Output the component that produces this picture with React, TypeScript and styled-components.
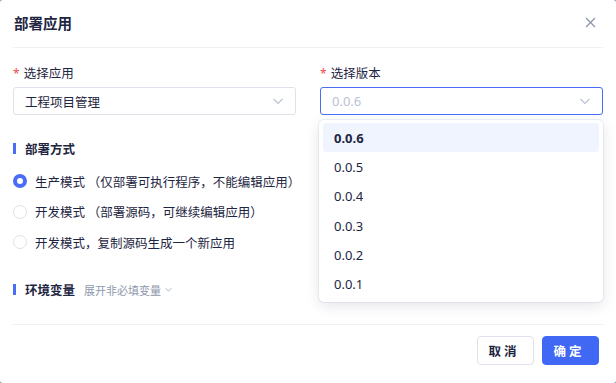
import styled, { createGlobalStyle } from 'styled-components';

const GlobalStyle = createGlobalStyle`
  html, body {
    margin: 0;
    padding: 0;
    background: #9aa0ad;
  }
  body {
    font-family: "Noto Sans", "Noto Sans CJK SC", sans-serif;
    color: #1d2541;
  }
  * { box-sizing: border-box; }
`;

const Modal = styled.div`
  width: 616px;
  height: 383px;
  background: #fff;
  border-radius: 3px;
  display: flex;
  flex-direction: column;
  padding: 0 13px;
  position: relative;
`;

const Header = styled.div`
  height: 48px;
  display: flex;
  align-items: center;
  justify-content: space-between;
  border-bottom: 1px solid #eef0f4;
  padding: 0 0 3px 1px;
`;

const Title = styled.div`
  font-size: 14.5px;
  font-weight: 600;
  color: #1d2541;
`;

const Close = styled.button`
  border: 0;
  background: none;
  padding: 0;
  width: 14px;
  height: 14px;
  margin-right: 6px;
  display: flex;
  align-items: center;
  justify-content: center;
  cursor: pointer;
`;

const Body = styled.div`
  flex: 1;
  padding-top: 17px;
  border-bottom: 1px solid #eef0f4;
`;

const FieldGrid = styled.div`
  display: grid;
  grid-template-columns: 283px 283px;
  column-gap: 24px;
`;

const Field = styled.div`
  position: relative;
  display: flex;
  flex-direction: column;
  gap: 4px;
`;

const Label = styled.div`
  font-size: 12.5px;
  line-height: 18px;
  color: #1d2541;
  display: flex;
  align-items: center;

  &::before {
    content: '*';
    color: #f04b4b;
    margin-right: 4px;
    font-size: 12px;
  }
`;

const Select = styled.div<{ $open?: boolean }>`
  height: 28px;
  border: 1px solid ${(p) => (p.$open ? '#4a6cf7' : '#dfe2ea')};
  border-radius: 3px;
  display: flex;
  align-items: center;
  justify-content: space-between;
  padding: 0 10px 0 11px;
  font-size: ${(p) => (p.$open ? '13px' : '12.5px')};
  color: ${(p) => (p.$open ? '#b9c1d3' : '#1d2541')};
`;

const Dropdown = styled.div`
  position: absolute;
  top: 55px;
  left: -1px;
  width: 284px;
  background: #fff;
  border-radius: 5px;
  box-shadow: 0 4px 14px rgba(30, 40, 70, 0.12), 0 0 0 1px rgba(230, 233, 240, 0.6);
  padding: 3px 4px 3px;
  z-index: 2;
`;

const Option = styled.div<{ $active?: boolean }>`
  height: 29.3px;
  display: flex;
  align-items: center;
  padding-left: 11px;
  border-radius: 3px;
  font-size: 13px;
  color: #1d2541;
  font-weight: ${(p) => (p.$active ? 700 : 400)};
  background: ${(p) => (p.$active ? '#f0f4fe' : 'transparent')};
`;

const Section = styled.div<{ $top: number }>`
  margin-top: ${(p) => p.$top}px;
  display: flex;
  align-items: center;
  height: 18px;
  font-size: 12.5px;
  font-weight: 600;
  color: #1d2541;

  &::before {
    content: '';
    width: 3px;
    height: 11px;
    background: #4a6cf7;
    margin-right: 9px;
  }
`;

const SubLink = styled.span`
  font-size: 11px;
  font-weight: 400;
  color: #8e97ad;
  margin-left: 9px;
  display: inline-flex;
  align-items: center;
  gap: 3px;
`;

const RadioList = styled.div`
  margin-top: 9px;
  display: flex;
  flex-direction: column;
`;

const RadioRow = styled.label`
  height: 30.5px;
  display: flex;
  align-items: center;
  gap: 8px;
  font-family: "Noto Sans CJK SC", sans-serif;
  font-size: 12.5px;
  color: #1d2541;
`;

const RadioDot = styled.span<{ $on?: boolean }>`
  width: 14px;
  height: 14px;
  border-radius: 50%;
  border: ${(p) => (p.$on ? '4px solid #4a6cf7' : '1px solid #dfe2ea')};
  background: #fff;
`;

const Footer = styled.div`
  height: 58px;
  display: flex;
  align-items: flex-start;
  justify-content: flex-end;
  gap: 8px;
  padding-top: 11px;
  padding-right: 4px;
`;

const Button = styled.button<{ $primary?: boolean }>`
  width: 57px;
  height: 29px;
  border-radius: 4px;
  font-family: inherit;
  font-size: 12.5px;
  font-weight: 600;
  letter-spacing: 3px;
  padding-left: 3px;
  border: 1px solid ${(p) => (p.$primary ? '#4167f5' : '#dfe2ea')};
  background: ${(p) => (p.$primary ? '#4167f5' : '#fff')};
  color: ${(p) => (p.$primary ? '#fff' : '#1d2541')};
`;

const Chevron = ({ size = 14, color = '#b9c1d3' }: { size?: number; color?: string }) => (
  <svg width={size} height={size} viewBox="0 0 14 14" fill="none">
    <path d="M2.5 5 L7 9.5 L11.5 5" stroke={color} strokeWidth="1.1" />
  </svg>
);

const versions = ['0.0.6', '0.0.5', '0.0.4', '0.0.3', '0.0.2', '0.0.1'];

const modes = [
  '生产模式 （仅部署可执行程序，不能编辑应用）',
  '开发模式 （部署源码，可继续编辑应用）',
  '开发模式，复制源码生成一个新应用',
];

const App = () => {
  return (
    <>
      <GlobalStyle />
      <Modal>
        <Header>
          <Title>部署应用</Title>
          <Close aria-label="close">
            <svg width="11" height="11" viewBox="0 0 11 11">
              <path d="M1 1 L10 10 M10 1 L1 10" stroke="#8a93a8" strokeWidth="1.2" />
            </svg>
          </Close>
        </Header>
        <Body>
          <FieldGrid>
            <Field>
              <Label>选择应用</Label>
              <Select>
                工程项目管理
                <Chevron />
              </Select>
            </Field>
            <Field>
              <Label>选择版本</Label>
              <Select $open>
                0.0.6
                <Chevron />
              </Select>
              <Dropdown>
                {versions.map((v, i) => (
                  <Option key={v} $active={i === 0}>
                    {v}
                  </Option>
                ))}
              </Dropdown>
            </Field>
          </FieldGrid>

          <Section $top={24}>部署方式</Section>
          <RadioList>
            {modes.map((m, i) => (
              <RadioRow key={m}>
                <RadioDot $on={i === 0} />
                {m}
              </RadioRow>
            ))}
          </RadioList>

          <Section $top={23}>
            环境变量
            <SubLink>
              展开非必填变量
              <Chevron size={9} color="#8e97ad" />
            </SubLink>
          </Section>
        </Body>
        <Footer>
          <Button>取消</Button>
          <Button $primary>确定</Button>
        </Footer>
      </Modal>
    </>
  );
};

export default App;
